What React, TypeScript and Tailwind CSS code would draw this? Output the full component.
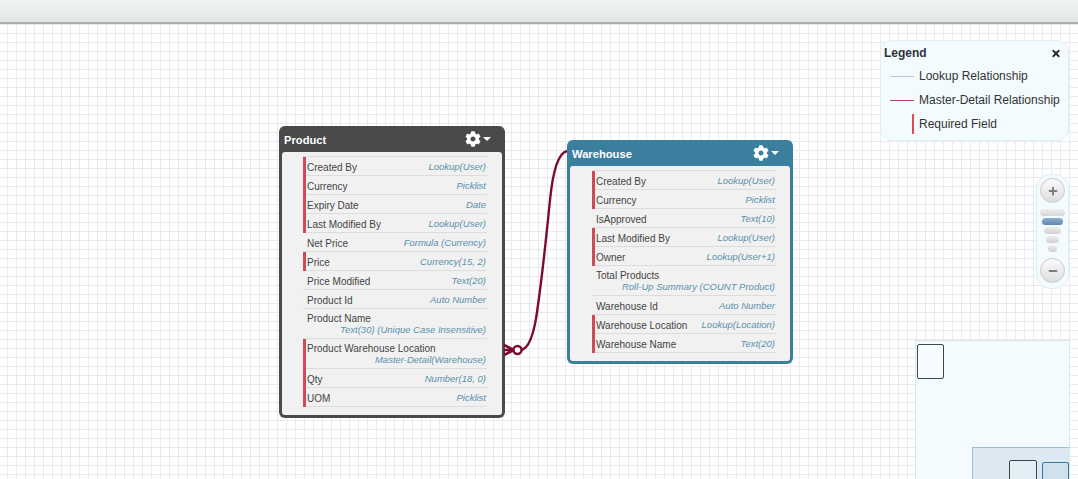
import React from 'react';
import { FaCog, FaPlus, FaMinus, FaTimes } from 'react-icons/fa';

type Field = { name: string; type: string; required?: boolean; tall?: boolean };

const productFields: Field[] = [
  { name: 'Created By', type: 'Lookup(User)', required: true },
  { name: 'Currency', type: 'Picklist', required: true },
  { name: 'Expiry Date', type: 'Date', required: true },
  { name: 'Last Modified By', type: 'Lookup(User)', required: true },
  { name: 'Net Price', type: 'Formula (Currency)' },
  { name: 'Price', type: 'Currency(15, 2)', required: true },
  { name: 'Price Modified', type: 'Text(20)' },
  { name: 'Product Id', type: 'Auto Number' },
  { name: 'Product Name', type: 'Text(30) (Unique Case Insensitive)', tall: true },
  { name: 'Product Warehouse Location', type: 'Master-Detail(Warehouse)', required: true, tall: true },
  { name: 'Qty', type: 'Number(18, 0)', required: true },
  { name: 'UOM', type: 'Picklist', required: true },
];

const warehouseFields: Field[] = [
  { name: 'Created By', type: 'Lookup(User)', required: true },
  { name: 'Currency', type: 'Picklist', required: true },
  { name: 'IsApproved', type: 'Text(10)' },
  { name: 'Last Modified By', type: 'Lookup(User)', required: true },
  { name: 'Owner', type: 'Lookup(User+1)', required: true },
  { name: 'Total Products', type: 'Roll-Up Summary (COUNT Product)', tall: true },
  { name: 'Warehouse Id', type: 'Auto Number' },
  { name: 'Warehouse Location', type: 'Lookup(Location)', required: true },
  { name: 'Warehouse Name', type: 'Text(20)', required: true },
];

const FieldRow: React.FC<{ field: Field }> = ({ field }) => (
  <div className="ml-[21px] mr-[15px] border-b border-[#dcdcdc] flex">
    <div className={`w-[3px] shrink-0 -mb-px ${field.required ? 'bg-[#cf4a55]' : ''}`} />
    {field.tall ? (
      <div className="flex-1 h-[29px] pl-[1px] pr-[1px] pt-[4px] flex flex-col leading-[11px]">
        <span className="text-[#444] text-[10px]">{field.name}</span>
        <span className="text-right italic text-[#5a90ab] text-[9.5px]">{field.type}</span>
      </div>
    ) : (
      <div className="flex-1 h-[18px] pl-[1px] pr-[1px] pt-[2px] flex items-center justify-between">
        <span className="text-[#444] text-[10px]">{field.name}</span>
        <span className="italic text-[#5a90ab] text-[9.5px]">{field.type}</span>
      </div>
    )}
  </div>
);

const ObjectCard: React.FC<{ title: string; fields: Field[]; className: string; rowsClass?: string }> = ({
  title,
  fields,
  className,
  rowsClass = '',
}) => (
  <div className={`absolute w-[226px] rounded-[6px] border-[3px] border-t-0 ${className}`}>
    <div className="h-[26px] flex items-center justify-between pl-[2px] pr-[11px] pt-[3px]">
      <span className="text-white font-bold text-[11.2px]">{title}</span>
      <span className="flex items-center gap-[2px] text-white -mt-[3px]">
        <FaCog className="w-[16px] h-[16px]" />
        <span className="w-0 h-0 border-x-[4px] border-x-transparent border-t-[4px] border-t-white" />
      </span>
    </div>
    <div className="bg-[#f1f1f1] rounded-[3px] pt-[4px] pb-[8px]">
      <div className={rowsClass}>
        <div className="ml-[21px] mr-[15px] border-t border-[#dcdcdc]" />
        {fields.map((f) => (
          <FieldRow key={f.name} field={f} />
        ))}
      </div>
    </div>
  </div>
);

export default function App() {
  return (
    <div className="w-[1078px] h-[479px] overflow-hidden flex flex-col bg-white font-['Liberation_Sans',Arial,sans-serif]">
      <div className="h-[24px] shrink-0 bg-gradient-to-b from-[#f1f4f5] to-[#e2e6e7] border-b-2 border-[#a9adad]" />
      <div className="relative flex-1 overflow-hidden bg-white bg-[linear-gradient(to_right,#e7ebee_1px,transparent_1px),linear-gradient(to_bottom,#e7ebee_1px,transparent_1px)] bg-[length:9px_9px] bg-[position:7px_0]">
        <ObjectCard title="Product" fields={productFields} className="left-[279px] top-[102px] bg-[#4a4a4a] border-[#4a4a4a]" />
        <ObjectCard
          title="Warehouse"
          fields={warehouseFields}
          className="left-[567px] top-[116px] bg-[#3b7f9f] border-[#3b7f9f]"
          rowsClass="ml-px -mr-px"
        />

        {/* relationship line */}
        <svg className="absolute left-[500px] top-[116px]" width="72" height="220" viewBox="0 0 72 220" fill="none">
          <path d="M67 11 C58 13 53 30 50 60 C47 90 43 130 38 165 C35 190 30 210 20 210" stroke="#7b0a35" strokeWidth="2.4" />
          <path d="M4 205 L14 210 L4 215 M4 210 L14 210" stroke="#7b0a35" strokeWidth="2.6" />
          <circle cx="17.5" cy="210" r="4" fill="#fff" stroke="#7b0a35" strokeWidth="2.4" />
        </svg>

        {/* legend */}
        <div className="absolute left-[880px] top-[16px] w-[189px] h-[101px] rounded-[12px] border border-[#e2eff6] bg-[#f3fbfe] text-[12px] text-[#333]">
          <div className="flex items-center justify-between pl-[3px] pr-[8px] pt-[3px]">
            <span className="font-bold text-[#2f3338]">Legend</span>
            <FaTimes className="w-[8px] h-[11px] text-[#2a2a2a]" />
          </div>
          <div className="flex items-center h-[24px] mt-[2px] pl-[9px]">
            <span className="w-[24px] h-px bg-[#b4cdd6]" />
            <span className="ml-[5px]">Lookup Relationship</span>
          </div>
          <div className="flex items-center h-[24px] pl-[9px]">
            <span className="w-[24px] h-px bg-[#b8476b]" />
            <span className="ml-[5px]">Master-Detail Relationship</span>
          </div>
          <div className="flex items-center h-[24px] pl-[31px]">
            <span className="w-[2px] h-[20px] bg-[#dd4b50]" />
            <span className="ml-[5px]">Required Field</span>
          </div>
        </div>

        {/* zoom control */}
        <div className="absolute left-[1036px] top-[150px] w-[33px] h-[115px] rounded-[14px] border border-[#e2eff6] bg-[#f3fbfe] flex flex-col items-center pt-[3px]">
          <button className="w-[25px] h-[25px] rounded-full border border-[#c9c9c9] bg-gradient-to-b from-[#fbfbfb] to-[#dedede] flex items-center justify-center">
            <FaPlus className="w-[10px] h-[10px] text-[#7c7c7c]" />
          </button>
          <div className="flex flex-col items-center gap-[2px] mt-[6px]">
            <span className="w-[25px] h-[7px] rounded-full bg-gradient-to-b from-[#efefef] to-[#d6d6d6]" />
            <span className="w-[21px] h-[7px] rounded-full bg-gradient-to-b from-[#8fb0d0] to-[#5f86ae]" />
            <span className="w-[17px] h-[7px] rounded-full bg-gradient-to-b from-[#efefef] to-[#d0d0d0]" />
            <span className="w-[13px] h-[7px] rounded-full bg-gradient-to-b from-[#efefef] to-[#d0d0d0]" />
            <span className="w-[9px] h-[7px] rounded-full bg-gradient-to-b from-[#efefef] to-[#d0d0d0]" />
          </div>
          <button className="w-[25px] h-[25px] mt-[6px] rounded-full border border-[#c9c9c9] bg-gradient-to-b from-[#fbfbfb] to-[#dedede] flex items-center justify-center">
            <FaMinus className="w-[10px] h-[10px] text-[#7c7c7c]" />
          </button>
        </div>

        {/* minimap */}
        <div className="absolute left-[915px] top-[316px] w-[155px] h-[150px] border border-[#d8e6f0] bg-[#f3fbfe]">
          <div className="absolute left-[1px] top-[3px] w-[27px] h-[35px] rounded-[2px] border border-[#3d4650] bg-[#f6fbfe]" />
          <div className="absolute left-[56px] top-[106px] right-0 bottom-0 border-l border-t border-[#a5bccd] bg-[#dce9f2]">
            <div className="absolute left-[36px] top-[12px] w-[28px] h-[30px] rounded-[2px] border border-[#3d4650] bg-[#e3eff4]" />
            <div className="absolute left-[69px] top-[14px] w-[27px] h-[30px] rounded-[2px] border border-[#2f7b9e] bg-[#d0e0ec]" />
          </div>
        </div>
      </div>
    </div>
  );
}
